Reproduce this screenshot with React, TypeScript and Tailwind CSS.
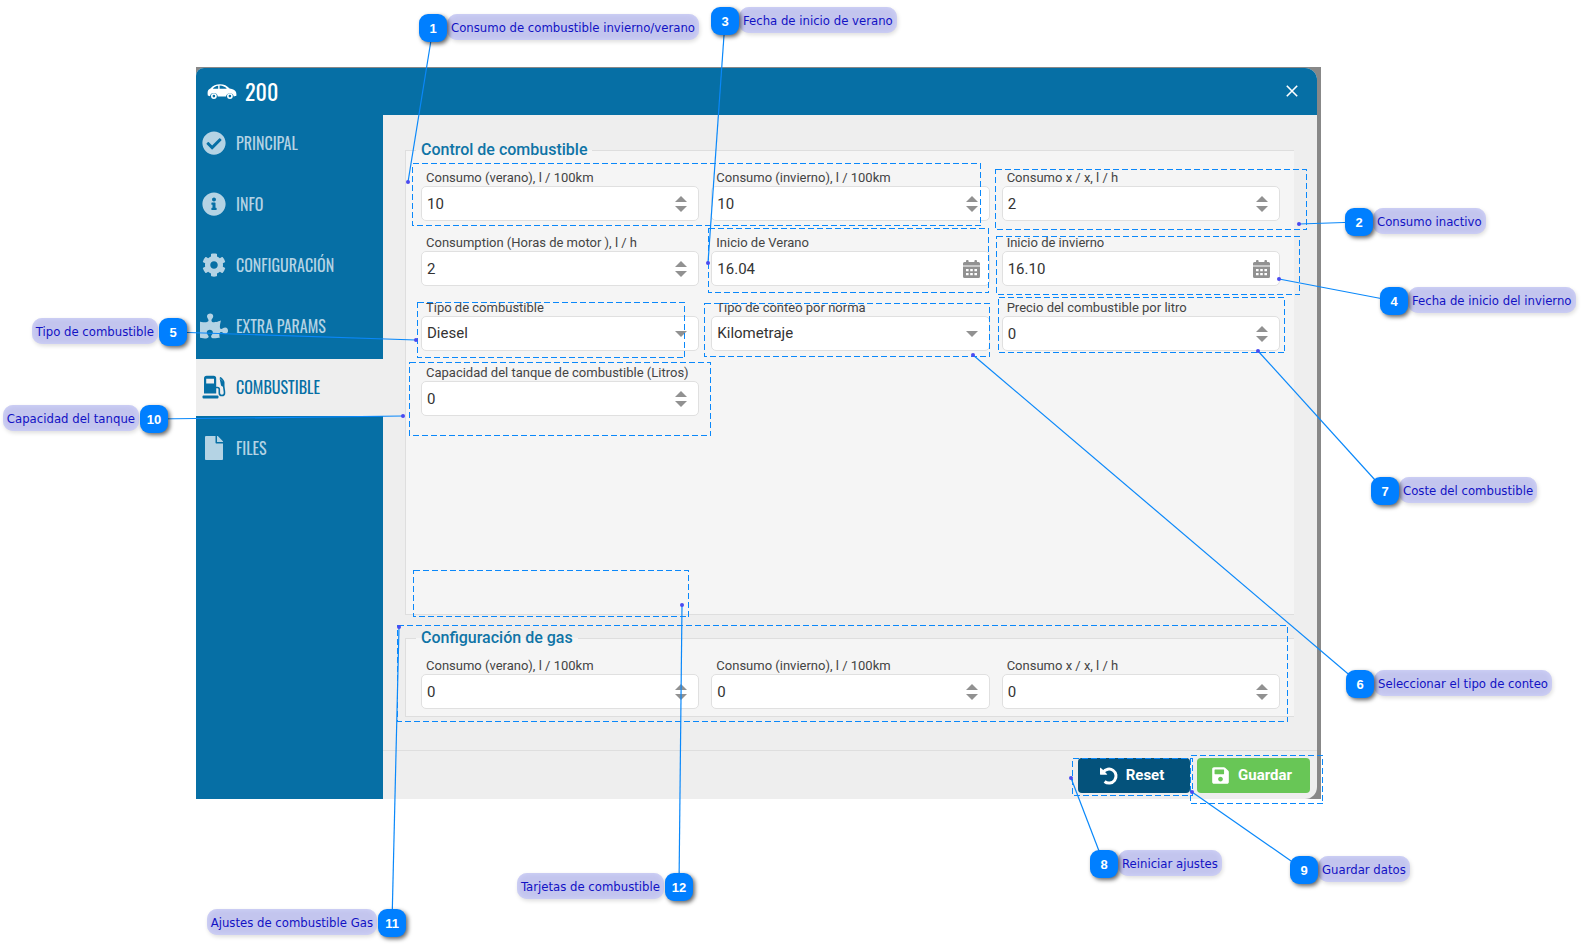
import type { ComponentType, ReactNode } from "react";
import { FaCheckCircle, FaCog, FaFile, FaInfoCircle, FaPuzzlePiece, FaSave } from "react-icons/fa";

type IconProps = { className?: string };

const CarIcon = ({ className }: IconProps) => (
  <svg viewBox="0 0 30 15" className={className} fill="currentColor" aria-hidden="true">
    <path
      fillRule="evenodd"
      d="M.6 9.6C.4 7 1.400 5.400 3.400 4.600C6 1.600 9 .3 13 .3c4.200 0 7 1.400 9.600 4.300c3.400.5 5.600 1.500 6.400 3.400c.5 1.400.5 2.600.4 3.800l-2.700.6a3.900 3.900 0 0 0-7.700.2h-8.300a3.900 3.900 0 0 0-7.700-.4L.8 11.600zM5.800 4.700h5.400V1.700C8.800 1.900 7.200 2.900 5.800 4.700zM12.600 1.600v3.100h7.200C18.200 2.800 15.800 1.700 12.600 1.600z"
    />
    <path
      fillRule="evenodd"
      d="M6.900 9.200a2.900 2.900 0 1 1 0 5.800a2.900 2.900 0 0 1 0-5.800zm0 1.600a1.300 1.300 0 1 0 0 2.600a1.300 1.300 0 0 0 0-2.600zM22.900 9.200a2.900 2.900 0 1 1 0 5.800a2.900 2.900 0 0 1 0-5.800zm0 1.600a1.300 1.300 0 1 0 0 2.600a1.300 1.300 0 0 0 0-2.600z"
    />
  </svg>
);

const PumpIcon = ({ className }: IconProps) => (
  <svg viewBox="0 0 24 24" className={className} fill="currentColor" aria-hidden="true">
    <path
      fillRule="evenodd"
      d="M2 18.600V3.400A2.600 2.600 0 0 1 4.600.8h7A2.600 2.600 0 0 1 14.200 3.400v15.200zM4.200 3.800v4.700h7.800V3.800z"
    />
    <rect x="0.5" y="20.600" width="16" height="3" rx="1" />
    <path
      d="M14 12.500h1.400c1.500 0 1.900.9 1.900 2v3.500c0 3.400 5.200 3.400 5.200 0c0-3-.8-4.500-.8-7.500V7.500c0-2-1.300-3-3.700-5"
      fill="none"
      stroke="currentColor"
      strokeWidth="1.600"
    />
    <path d="M17.600 3.500l4 3.500v4.800c-1.800-.2-2.800-1-2.800-2.500z" />
  </svg>
);

const CalendarIcon = ({ className }: IconProps) => (
  <svg viewBox="0 0 17 18" className={className} fill="currentColor" aria-hidden="true">
    <path d="M3 1a1 1 0 0 1 1-1h.6a1 1 0 0 1 1 1v1h5.800V1a1 1 0 0 1 1-1h.6a1 1 0 0 1 1 1v1H15.500A1.500 1.500 0 0 1 17 3.500V5.500H0V3.500A1.500 1.500 0 0 1 1.500 2H3z" />
    <path
      fillRule="evenodd"
      d="M0 6.500h17v10a1.500 1.500 0 0 1-1.500 1.500h-14A1.500 1.500 0 0 1 0 16.500zM3 9v2.200h2.600V9zM7.200 9v2.200h2.600V9zM11.400 9v2.200h2.600V9zM3 13v2.200h2.600V13zM7.200 13v2.200h2.600V13zM11.400 13v2.200h2.600V13z"
    />
  </svg>
);

const UndoIcon = ({ className }: IconProps) => (
  <svg viewBox="0 0 18 18" className={className} fill="currentColor" aria-hidden="true">
    <path d="M.4.6v6.800h7z" />
    <path d="M0 7.500V.8L2.300 2.600L7 7.500z" />
    <path
      d="M3.200 5.200A7 7 0 1 1 4.600 14.500"
      fill="none"
      stroke="currentColor"
      strokeWidth="3"
    />
  </svg>
);

const NAV: { label: string; icon: ComponentType<IconProps>; size: string; active?: boolean }[] = [
  { label: "PRINCIPAL", icon: FaCheckCircle, size: "size-6" },
  { label: "INFO", icon: FaInfoCircle, size: "size-6" },
  { label: "CONFIGURACIÓN", icon: FaCog, size: "size-6" },
  { label: "EXTRA PARAMS", icon: FaPuzzlePiece, size: "size-7 shrink-0" },
  { label: "COMBUSTIBLE", icon: PumpIcon, size: "size-6", active: true },
  { label: "FILES", icon: FaFile, size: "size-6" },
];

const Field = ({ id, label, children }: { id: string; label: string; children: ReactNode }) => (
  <div>
    <label
      htmlFor={id}
      className="block pt-1 pl-[5px] text-[13px] leading-4 whitespace-nowrap text-[#444]"
    >
      {label}
    </label>
    <div className="flex h-[35px] items-center rounded-[5px] border border-[#e0e0e0] bg-white pr-[11px]">
      {children}
    </div>
  </div>
);

const inputClass =
  "h-full w-0 flex-1 appearance-none bg-transparent pl-[5px] text-[15px] text-[#333] outline-none";

const NumberField = ({ id, label, value }: { id: string; label: string; value: string }) => (
  <Field id={id} label={label}>
    <input id={id} type="text" inputMode="numeric" defaultValue={value} className={inputClass} />
    <div className="flex flex-col gap-1 text-[#919191]">
      <button type="button" aria-label="Aumentar" className="block">
        <svg viewBox="0 0 12 6" className="h-1.5 w-3" fill="currentColor">
          <path d="M6 0l6 6H0z" />
        </svg>
      </button>
      <button type="button" aria-label="Disminuir" className="block">
        <svg viewBox="0 0 12 6" className="h-1.5 w-3" fill="currentColor">
          <path d="M0 0h12L6 6z" />
        </svg>
      </button>
    </div>
  </Field>
);

const DateField = ({ id, label, value }: { id: string; label: string; value: string }) => (
  <Field id={id} label={label}>
    <input id={id} type="text" defaultValue={value} className={inputClass} />
    <button type="button" aria-label="Calendario" className="-mr-0.5 text-[#919191]">
      <CalendarIcon className="h-[18px] w-[17px]" />
    </button>
  </Field>
);

const SelectField = ({ id, label, value }: { id: string; label: string; value: string }) => (
  <Field id={id} label={label}>
    <select id={id} defaultValue={value} className={inputClass}>
      <option>{value}</option>
    </select>
    <svg viewBox="0 0 12 6" className="h-1.5 w-3 text-[#919191]" fill="currentColor">
      <path d="M0 0h12L6 6z" />
    </svg>
  </Field>
);

const Group = ({ title, className, children }: { title: string; className: string; children: ReactNode }) => (
  <fieldset className={`border-y border-l border-[#dedede] bg-[#f5f5f5] pr-3.5 pl-[15px] ${className}`}>
    <legend className="-ml-[5px] px-[5px] text-base leading-6 font-medium text-[#0f74a6]">
      {title}
    </legend>
    <div className="grid grid-cols-3 gap-x-3 gap-y-2.5 pt-1">{children}</div>
  </fieldset>
);

type Callout = {
  n: number;
  text: string;
  x: number;
  y: number;
  side: "left" | "right";
  dot: [number, number];
  box: [number, number, number, number];
};

// x, y: top left corner of the badge; box: left, top, right, bottom
const CALLOUTS: Callout[] = [
  { n: 1, text: "Consumo de combustible invierno/verano", x: 419, y: 14, side: "right", dot: [408, 182], box: [412, 163, 980, 225] },
  { n: 2, text: "Consumo inactivo", x: 1345, y: 208, side: "right", dot: [1299, 224], box: [995, 169, 1306, 229] },
  { n: 3, text: "Fecha de inicio de verano", x: 711, y: 7, side: "right", dot: [708, 263], box: [708, 228, 988, 292] },
  { n: 4, text: "Fecha de inicio del invierno", x: 1380, y: 287, side: "right", dot: [1279, 279], box: [996, 236, 1299, 294] },
  { n: 5, text: "Tipo de combustible", x: 159, y: 318, side: "left", dot: [416, 340], box: [417, 302, 684, 357] },
  { n: 6, text: "Seleccionar el tipo de conteo", x: 1346, y: 670, side: "right", dot: [973, 355], box: [704, 303, 989, 356] },
  { n: 7, text: "Coste del combustible", x: 1371, y: 477, side: "right", dot: [1258, 351], box: [998, 297, 1284, 352] },
  { n: 8, text: "Reiniciar ajustes", x: 1090, y: 850, side: "right", dot: [1071, 778], box: [1072, 758, 1192, 795] },
  { n: 9, text: "Guardar datos", x: 1290, y: 856, side: "right", dot: [1192, 792], box: [1190, 755, 1322, 803] },
  { n: 10, text: "Capacidad del tanque", x: 140, y: 405, side: "left", dot: [403, 416], box: [409, 362, 710, 435] },
  { n: 11, text: "Ajustes de combustible Gas", x: 378, y: 909, side: "left", dot: [399, 627], box: [397, 625, 1287, 721] },
  { n: 12, text: "Tarjetas de combustible", x: 665, y: 873, side: "left", dot: [682, 605], box: [413, 570, 688, 616] },
];

const Callouts = () => (
  <div className="pointer-events-none absolute inset-0">
    <svg className="absolute inset-0 h-full w-full" fill="none" stroke="#0a88fa">
      {CALLOUTS.map(({ n, x, y, dot, box: [l, t, r, b] }) => (
        <g key={n}>
          <rect
            x={l + 0.5}
            y={t + 0.5}
            width={r - l}
            height={b - t}
            strokeDasharray="6 3"
            shapeRendering="crispEdges"
          />
          <line x1={dot[0]} y1={dot[1]} x2={x + 14} y2={y + 14} strokeWidth="1.2" />
          <circle cx={dot[0]} cy={dot[1]} r="2" fill="#4a4af0" stroke="none" />
        </g>
      ))}
    </svg>
    {CALLOUTS.map(({ n, text, x, y, side }) => (
      <div key={n} className="absolute" style={{ left: x, top: y }}>
        <span
          className={`absolute top-0 h-[26px] rounded-[10px] bg-[#c3c5ee] px-1 text-[13px] leading-[27px] whitespace-nowrap text-[#1212c4] shadow-[inset_0_0_5px_#d4d6fa,1px_2px_4px_#0002] ${
            side === "right" ? "left-full" : "right-full mr-px"
          }`}
        >
          {text}
        </span>
        <span className="relative flex size-7 items-center justify-center rounded-[9px] bg-[#007fff] pt-px font-['Liberation_Sans'] text-[13px] font-bold text-white shadow-[2px_2px_4px_#0009]">
          {n}
        </span>
      </div>
    ))}
  </div>
);

const App = () => {
  return (
    <div className="relative min-h-screen bg-white pt-[67px] pr-[263px] pl-[196px] font-['DejaVu_Sans_Condensed','DejaVu_Sans',sans-serif]">
      <div className="bg-[#888] pt-px pr-1 font-[Roboto,sans-serif]">
        <div className="overflow-hidden rounded-tl-lg rounded-r-xl bg-[#eee]">
          <header className="flex h-[47px] items-center bg-[#066fa5] pr-[19px] pb-px pl-[11px] text-white">
            <CarIcon className="h-[15px] w-[30px]" />
            <h1 className="ml-2 flex-1 font-['Oswald','Liberation_Sans_Narrow',sans-serif] text-[22px] leading-none font-normal">
              200
            </h1>
            <button type="button" aria-label="Cerrar">
              <svg viewBox="0 0 12 12" className="size-3" stroke="currentColor" strokeWidth="1.600">
                <path d="M.8 .8l10.400 10.400M11.200 .8L.8 11.200" />
              </svg>
            </button>
          </header>

          <div className="flex">
            <nav className="flex w-[187px] shrink-0 flex-col gap-1 bg-[#066fa5]">
              {NAV.map(({ label, icon: Icon, size, active }) => (
                <a
                  key={label}
                  href="#"
                  className={`flex h-[57px] items-center pb-0.5 pl-[5px] font-['Oswald','Liberation_Sans_Narrow',sans-serif] text-base ${
                    active ? "bg-[#eee] text-[#066fa5]" : "text-[#b4d3e4]"
                  }`}
                >
                  <span className="flex w-[26px] justify-center">
                    <Icon className={size} />
                  </span>
                  <span className="ml-[9px]">{label}</span>
                </a>
              ))}
            </nav>

            <main className="min-w-0 flex-1">
              <form className="pt-[23px] pr-[23px] pb-[33px] pl-[22px]">
                <Group title="Control de combustible" className="min-h-[477px]">
                  <NumberField id="verano" label="Consumo (verano), l / 100km" value="10" />
                  <NumberField id="invierno" label="Consumo (invierno), l / 100km" value="10" />
                  <NumberField id="xx" label="Consumo x / x, l / h" value="2" />
                  <NumberField id="motor" label="Consumption (Horas de motor ), l / h" value="2" />
                  <DateField id="ini-verano" label="Inicio de Verano" value="16.04" />
                  <DateField id="ini-invierno" label="Inicio de invierno" value="16.10" />
                  <SelectField id="tipo" label="Tipo de combustible" value="Diesel" />
                  <SelectField id="conteo" label="Tipo de conteo por norma" value="Kilometraje" />
                  <NumberField id="precio" label="Precio del combustible por litro" value="0" />
                  <NumberField id="tanque" label="Capacidad del tanque de combustible (Litros)" value="0" />
                </Group>
                <Group title="Configuración de gas" className="mt-[11px] pb-[7px]">
                  <NumberField id="gas-verano" label="Consumo (verano), l / 100km" value="0" />
                  <NumberField id="gas-invierno" label="Consumo (invierno), l / 100km" value="0" />
                  <NumberField id="gas-xx" label="Consumo x / x, l / h" value="0" />
                </Group>
              </form>
              <footer className="flex justify-end gap-[7px] border-t border-[#dedede] px-[7px] pt-[7px] pb-1.5 text-[15px] font-bold text-white">
                <button
                  type="button"
                  className="flex h-[35px] w-28 items-center justify-center gap-2 rounded bg-[#04527b] pr-1"
                >
                  <UndoIcon className="size-[18px]" />
                  Reset
                </button>
                <button
                  type="button"
                  className="flex h-[35px] w-[113px] items-center justify-center gap-2 rounded bg-[#68c656] pr-1"
                >
                  <FaSave className="size-[19px]" />
                  Guardar
                </button>
              </footer>
            </main>
          </div>
        </div>
      </div>
      <Callouts />
    </div>
  );
};

export default App;
